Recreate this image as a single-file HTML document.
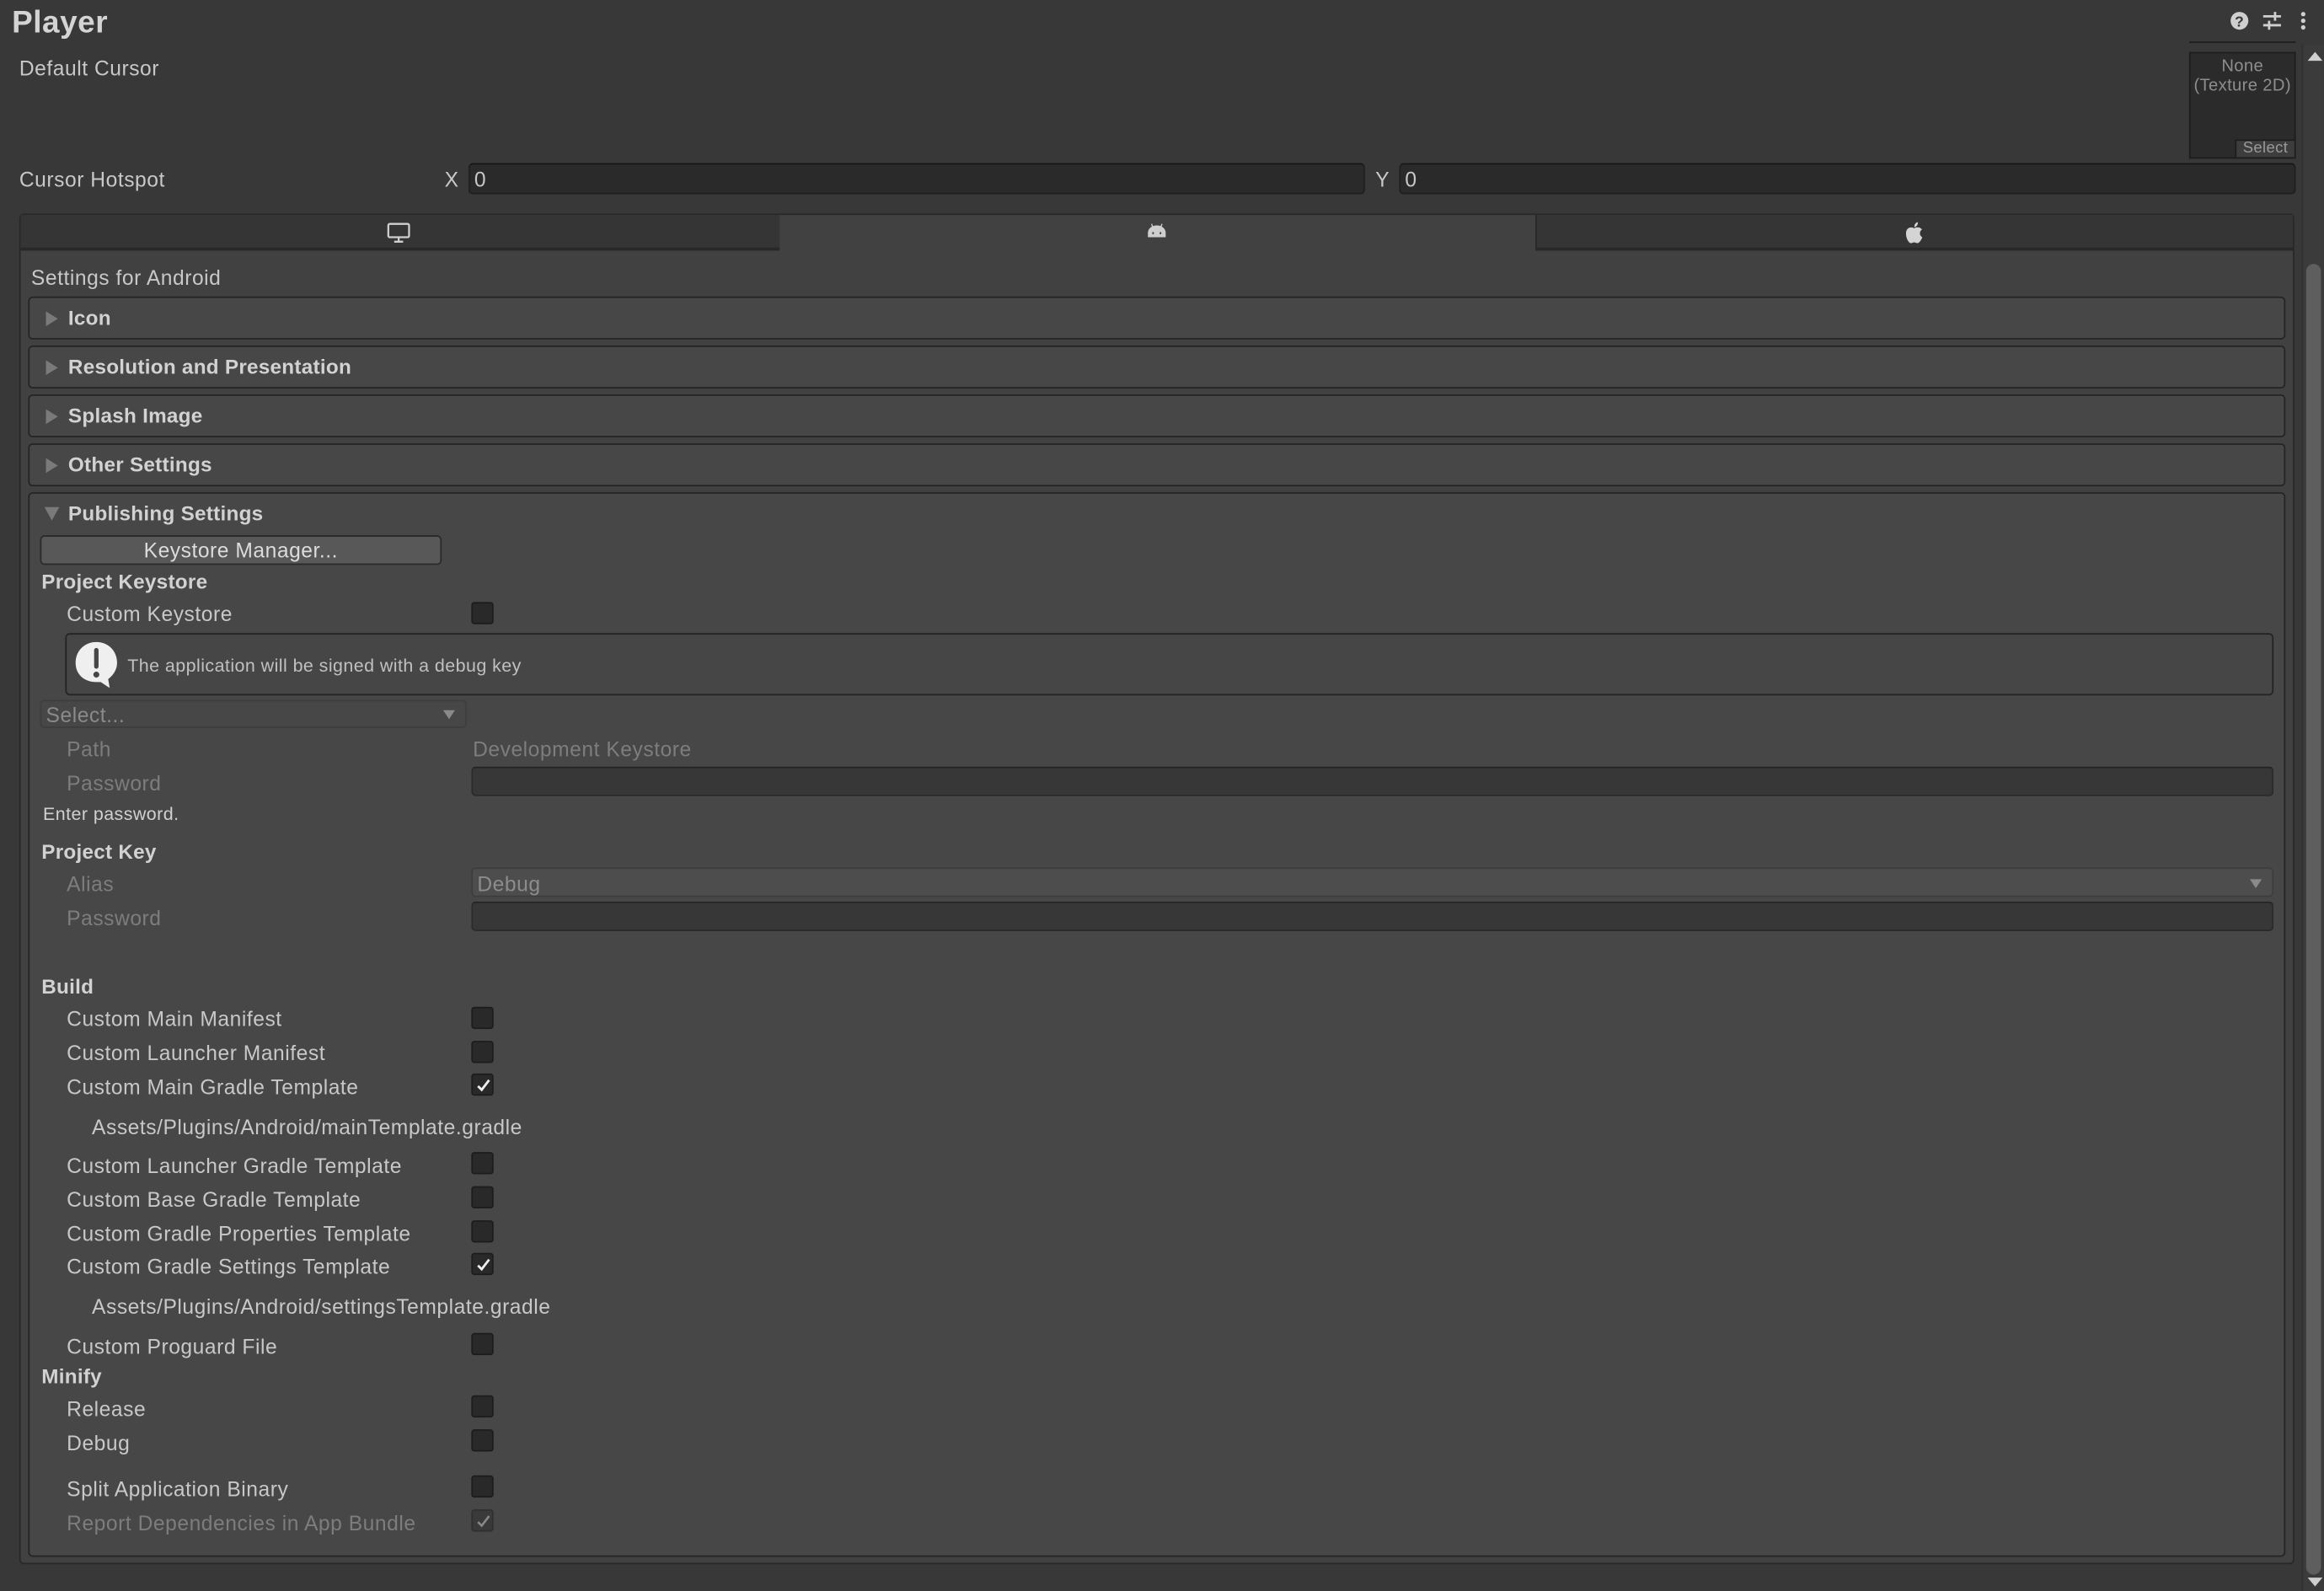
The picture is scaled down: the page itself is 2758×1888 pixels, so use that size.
<!DOCTYPE html>
<html><head><meta charset="utf-8">
<style>
*{margin:0;padding:0;box-sizing:border-box}
html,body{width:2758px;height:1888px;overflow:hidden;background:#383838}
#w{position:absolute;left:0;top:0;width:1568px;height:1073px;transform:scale(1.7589,1.7595);transform-origin:0 0;background:#383838;font-family:"Liberation Sans",sans-serif;color:#c8c8c8;font-size:14px;letter-spacing:0.3px}
.a{position:absolute;white-space:nowrap}
.t{position:absolute;white-space:nowrap;line-height:16px;height:16px;margin-top:1px}
.b{font-weight:bold;color:#d2d2d2;font-size:13.8px;letter-spacing:0.15px}
.d{color:#7d7d7d}
.cb{position:absolute;left:318px;width:15px;height:15px;background:#292929;border:1px solid #1c1c1c;border-radius:2px}
.cb svg{position:absolute;left:1px;top:1px}
.fo{position:absolute;left:19px;width:1523px;background:#474747;border:1px solid #242424;border-radius:3px}
.fo .t{left:26px}
.tri{position:absolute;left:11px;width:0;height:0;border-top:5px solid transparent;border-bottom:5px solid transparent;border-left:8px solid #7a7a7a}
.fld{position:absolute;background:#2a2a2a;border:1px solid #1f1f1f;border-top-color:#171717;border-radius:3px}
</style></head><body>
<div id="w">
<div class="t b" style="left:8px;top:4px;font-size:21px;line-height:22px;height:22px;color:#d4d4d4;letter-spacing:0.3px">Player</div>
<svg class="a" style="left:1504px;top:7px" width="14" height="14"><circle cx="7" cy="7" r="6" fill="#cfcfcf"/><text x="7" y="11" font-size="10" font-weight="bold" text-anchor="middle" fill="#383838" font-family="Liberation Sans">?</text></svg>
<svg class="a" style="left:1526px;top:7px" width="14" height="14" stroke="#cfcfcf" stroke-width="1.6"><path d="M1 4H13M1 10H13M9 1V7M5 7V13"/></svg>
<svg class="a" style="left:1550px;top:7px" width="8" height="14" fill="#cfcfcf"><circle cx="4" cy="2.5" r="1.5"/><circle cx="4" cy="7" r="1.5"/><circle cx="4" cy="11.5" r="1.5"/></svg>
<div class="a" style="left:1553px;top:30px;width:15px;height:1043px;background:#3b3b3b;border-left:1px solid #303030"></div>
<div class="a" style="left:1557px;top:35px;width:0;height:0;border-left:5px solid transparent;border-right:5px solid transparent;border-bottom:6px solid #cfcfcf"></div>
<div class="a" style="left:1556px;top:178px;width:10px;height:884px;background:#5e5e5e;border-radius:5px"></div>
<div class="a" style="left:1557px;top:1064px;width:0;height:0;border-left:5px solid transparent;border-right:5px solid transparent;border-top:6px solid #cfcfcf"></div>

<div class="t" style="left:13px;top:37px">Default Cursor</div>
<div class="a" style="left:1477px;top:28px;width:72px;height:1px;background:#1e1e1e"></div>
<div class="a" style="left:1477px;top:35px;width:72px;height:72px;background:#2b2b2b;border:1px solid #1d1d1d"></div>
<div class="a" style="left:1477px;top:39px;width:72px;text-align:center;font-size:11.5px;line-height:13px;color:#8e8e8e;letter-spacing:0.2px">None<br>(Texture 2D)</div>
<div class="a" style="left:1508px;top:94px;width:40px;height:12px;background:#3d3d3d;border-left:1px solid #1d1d1d;border-top:1px solid #1d1d1d;font-size:10.5px;line-height:11px;text-align:center;color:#999;letter-spacing:0.2px">Select</div>

<div class="t" style="left:13px;top:112px">Cursor Hotspot</div>
<div class="t" style="left:300px;top:112px">X</div>
<div class="fld" style="left:316px;top:110px;width:605px;height:21px"></div>
<div class="t" style="left:320px;top:112px">0</div>
<div class="t" style="left:928px;top:112px">Y</div>
<div class="fld" style="left:944px;top:110px;width:605px;height:21px"></div>
<div class="t" style="left:948px;top:112px">0</div>

<div class="a" style="left:13px;top:144px;width:1535px;height:911px;background:#414141;border:1px solid #282828;border-radius:3px"></div>
<div class="a" style="left:14px;top:145px;width:512px;height:24px;background:#353535;border-bottom:2px solid #282828"></div>
<div class="a" style="left:1036px;top:145px;width:511px;height:24px;background:#353535;border-bottom:2px solid #282828;border-left:1px solid #282828"></div>
<svg class="a" style="left:261px;top:150px" width="16" height="14" fill="none" stroke="#cfcfcf" stroke-width="1.3"><rect x="1" y="1" width="14" height="9" rx="1"/><path d="M8 10V13M5 13H11"/></svg>
<svg class="a" style="left:773px;top:149px" width="15" height="12" fill="#cfcfcf"><path d="M1.5 11V8A6 5 0 0 1 13.5 8V11Z"/><path d="M4 2L5 5M11 2L10 5" stroke="#cfcfcf" stroke-width="0.8"/><rect x="4.5" y="7.5" width="1" height="1.5" fill="#414141"/><rect x="9.5" y="7.5" width="1" height="1.5" fill="#414141"/></svg>
<svg class="a" style="left:1285px;top:149px" width="13" height="16" fill="#d4d4d4"><path d="M6.5 5C5 3.8 1 4 1 8.5C1 12 3 15 4.3 15C5.3 15 5.5 14.5 6.5 14.5C7.5 14.5 7.8 15 8.8 15C10 15 11.5 12.5 12 11C10 10 9.8 7 11.8 5.8C10.5 4 8 4 6.5 5Z"/><path d="M6.6 4.2C6.5 2.5 7.5 1 9 0.8C9.2 2.5 8 4 6.6 4.2Z"/></svg>

<div class="t" style="left:21px;top:178px">Settings for Android</div>

<div class="fo" style="top:200px;height:29px"><div class="tri" style="top:9px"></div><div class="t b" style="top:5px">Icon</div></div>
<div class="fo" style="top:233px;height:29px"><div class="tri" style="top:9px"></div><div class="t b" style="top:5px">Resolution and Presentation</div></div>
<div class="fo" style="top:266px;height:29px"><div class="tri" style="top:9px"></div><div class="t b" style="top:5px">Splash Image</div></div>
<div class="fo" style="top:299px;height:29px"><div class="tri" style="top:9px"></div><div class="t b" style="top:5px">Other Settings</div></div>
<div class="fo" style="top:332px;height:718px">
  <div class="a" style="left:10px;top:9px;border-left:5px solid transparent;border-right:5px solid transparent;border-top:9px solid #7a7a7a"></div>
  <div class="t b" style="top:5px">Publishing Settings</div>
</div>

<div class="a" style="left:27px;top:361px;width:271px;height:20px;background:#585858;border:1px solid #2a2a2a;border-radius:3px;text-align:center;line-height:19px;color:#dcdcdc">Keystore Manager...</div>
<div class="t b" style="left:28px;top:384px">Project Keystore</div>
<div class="t" style="left:45px;top:405px">Custom Keystore</div>
<div class="cb" style="top:406px"></div>
<div class="a" style="left:44px;top:427px;width:1490px;height:42px;border:1px solid #232323;border-radius:3px;background:#464646"></div>
<svg class="a" style="left:50px;top:432px" width="31" height="33"><path d="M15 1C7 1 1 7 1 15C1 23 7 28 15 28L18 28L24 32L23 26C27 23 29 19 29 15C29 7 23 1 15 1Z" fill="#efefef"/><rect x="13.5" y="5" width="3" height="14" rx="1.5" fill="#464646"/><circle cx="15" cy="23" r="2" fill="#464646"/></svg>
<div class="t" style="left:86px;top:440px;font-size:12.2px;color:#c0c0c0;letter-spacing:0.25px">The application will be signed with a debug key</div>

<div class="a" style="left:27px;top:472px;width:288px;height:19px;border:1px solid #3e3e3e;border-radius:3px;background:#474747"></div>
<div class="t d" style="left:31px;top:473px;color:#8a8a8a">Select...</div>
<div class="a" style="left:299px;top:479px;border-left:4.5px solid transparent;border-right:4.5px solid transparent;border-top:6px solid #8a8a8a"></div>
<div class="t d" style="left:45px;top:496px">Path</div>
<div class="t d" style="left:319px;top:496px">Development Keystore</div>
<div class="t d" style="left:45px;top:519px">Password</div>
<div class="a" style="left:318px;top:517px;width:1216px;height:20px;background:#373737;border:1px solid #2a2a2a;border-top-color:#222;border-radius:3px"></div>
<div class="t" style="left:29px;top:540px;font-size:12.2px;color:#d0d0d0;letter-spacing:0.25px">Enter password.</div>

<div class="t b" style="left:28px;top:566px">Project Key</div>
<div class="t d" style="left:45px;top:587px">Alias</div>
<div class="a" style="left:318px;top:585px;width:1216px;height:20px;background:#4d4d4d;border:1px solid #3d3d3d;border-radius:3px"></div>
<div class="t d" style="left:322px;top:587px;color:#8c8c8c">Debug</div>
<div class="a" style="left:1518px;top:593px;border-left:4.5px solid transparent;border-right:4.5px solid transparent;border-top:6px solid #8a8a8a"></div>
<div class="t d" style="left:45px;top:610px">Password</div>
<div class="a" style="left:318px;top:608px;width:1216px;height:20px;background:#373737;border:1px solid #2a2a2a;border-top-color:#222;border-radius:3px"></div>

<div class="t b" style="left:28px;top:657px">Build</div>
<div class="t" style="left:45px;top:678px">Custom Main Manifest</div><div class="cb" style="top:679px"></div>
<div class="t" style="left:45px;top:701px">Custom Launcher Manifest</div><div class="cb" style="top:702px"></div>
<div class="t" style="left:45px;top:724px">Custom Main Gradle Template</div><div class="cb" style="top:724px"><svg width="12" height="12"><path d="M2.5 6.5L5 9L10 2.5" fill="none" stroke="#eee" stroke-width="1.6"/></svg></div>
<div class="t" style="left:62px;top:751px">Assets/Plugins/Android/mainTemplate.gradle</div>
<div class="t" style="left:45px;top:777px">Custom Launcher Gradle Template</div><div class="cb" style="top:777px"></div>
<div class="t" style="left:45px;top:800px">Custom Base Gradle Template</div><div class="cb" style="top:800px"></div>
<div class="t" style="left:45px;top:823px">Custom Gradle Properties Template</div><div class="cb" style="top:823px"></div>
<div class="t" style="left:45px;top:845px">Custom Gradle Settings Template</div><div class="cb" style="top:845px"><svg width="12" height="12"><path d="M2.5 6.5L5 9L10 2.5" fill="none" stroke="#eee" stroke-width="1.6"/></svg></div>
<div class="t" style="left:62px;top:872px">Assets/Plugins/Android/settingsTemplate.gradle</div>
<div class="t" style="left:45px;top:899px">Custom Proguard File</div><div class="cb" style="top:899px"></div>
<div class="t b" style="left:28px;top:920px">Minify</div>
<div class="t" style="left:45px;top:941px">Release</div><div class="cb" style="top:941px"></div>
<div class="t" style="left:45px;top:964px">Debug</div><div class="cb" style="top:964px"></div>
<div class="t" style="left:45px;top:995px">Split Application Binary</div><div class="cb" style="top:995px"></div>
<div class="t d" style="left:45px;top:1018px">Report Dependencies in App Bundle</div><div class="cb" style="top:1018px;background:#3a3a3a;border-color:#303030"><svg width="12" height="12"><path d="M2.5 6.5L5 9L10 2.5" fill="none" stroke="#888" stroke-width="1.5"/></svg></div>
</div>
</body></html>
